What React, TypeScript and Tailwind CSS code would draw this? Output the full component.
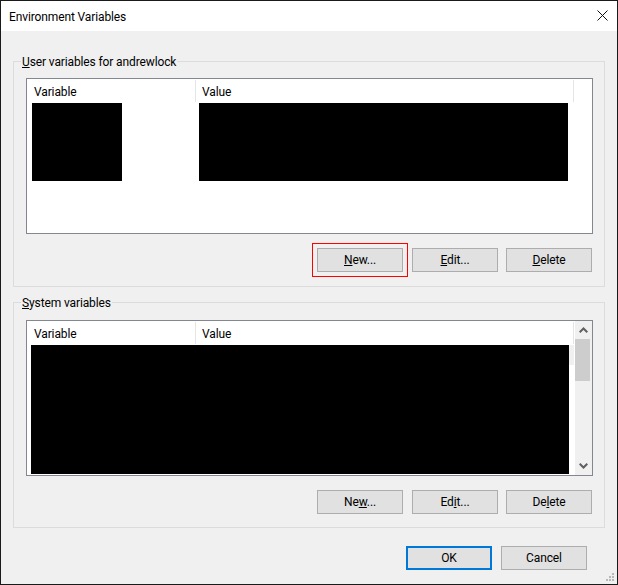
const font = 'font-["Roboto",sans-serif] tracking-[-0.12px]'

function Btn({ children, primary = false, className = '' }: { children: React.ReactNode; primary?: boolean; className?: string }) {
  return (
    <button
      type="button"
      className={`w-[86px] h-6 flex items-center justify-center bg-[#e1e1e1] text-[12px] text-black leading-none ${primary ? 'border-2 border-[#0078d7]' : 'border border-[#adadad]'} ${className}`}
    >
      {children}
    </button>
  )
}

function Group({ label, listTop = 'pt-4', children }: { label: React.ReactNode; listTop?: string; children: React.ReactNode }) {
  return (
    <div className={`relative h-[226px] border border-[#dcdcdc] pl-3 pr-[11px] ${listTop}`}>
      <span className="absolute -top-2 left-[7px] bg-[#f0f0f0] px-px text-[12px] leading-4 text-black">{label}</span>
      {children}
    </div>
  )
}

function ListHeader() {
  return (
    <div className="flex h-6 shrink-0 text-[12px] text-black">
      <div className="w-[169px] h-[22px] mt-px pt-0.5 pl-[7px] flex items-center border-r border-[#e5e5e5]">Variable</div>
      <div className="w-[378px] h-[22px] mt-px pt-0.5 pl-[6px] flex items-center border-r border-[#e5e5e5]">Value</div>
    </div>
  )
}

export default function App() {
  return (
    <div className={`relative w-[618px] h-[585px] overflow-hidden border border-[#1a1a1a] bg-[#f0f0f0] flex flex-col ${font}`}>
      {/* Title bar */}
      <div className="h-[30px] bg-white flex justify-between pl-2 pr-[9px] text-[12px] text-black">
        <span className="leading-[32px]">Environment Variables</span>
        <svg className="mt-[9px]" width="11" height="11" viewBox="0 0 11 11" stroke="#111" strokeWidth="1" fill="none">
          <path d="M0.5 0.5L10.5 10.5M10.5 0.5L0.5 10.5" />
        </svg>
      </div>

      <div className="flex-1 px-3 pt-[30px] flex flex-col">
        <Group label={<><u>U</u>ser variables for andrewlock</>}>
          <div className="h-[156px] border border-[#828790] bg-white flex flex-col">
            <ListHeader />
            <div className="flex pl-[5px]">
              <div className="w-[90px] h-[78px] bg-black" />
              <div className="ml-[77px] w-[369px] h-[78px] bg-black" />
            </div>
          </div>
          <div className="mt-[14px] mr-px flex justify-end">
            <Btn><span><u>N</u>ew...</span></Btn>
            <Btn className="ml-[9px]"><span><u>E</u>dit...</span></Btn>
            <Btn className="ml-2"><span><u>D</u>elete</span></Btn>
          </div>
        </Group>

        <div className="h-[15px] shrink-0" />

        <Group label={<><u>S</u>ystem variables</>} listTop="pt-[17px]">
          <div className="h-[156px] border border-[#828790] bg-white flex">
            <div className="flex-1 flex flex-col min-w-0">
              <ListHeader />
              <div className="flex ml-1">
                <div className="w-[538px] h-[129px] bg-black" />
                <div className="w-[5px] h-5 bg-[#f0f0f0]" />
              </div>
            </div>
            <div className="w-[17px] shrink-0 flex flex-col bg-[#f0f0f0]">
              <div className="h-[18px] flex items-center justify-center">
                <svg width="9" height="6" viewBox="0 0 9 6" fill="none" stroke="#606060" strokeWidth="2"><path d="M0.7 5.3L4.5 1.5L8.3 5.3" /></svg>
              </div>
              <div className="w-[15px] h-[42px] bg-[#cdcdcd]" />
              <div className="flex-1" />
              <div className="h-[18px] flex items-center justify-center">
                <svg width="9" height="6" viewBox="0 0 9 6" fill="none" stroke="#606060" strokeWidth="2"><path d="M0.7 0.7L4.5 4.5L8.3 0.7" /></svg>
              </div>
            </div>
          </div>
          <div className="mt-[14px] mr-px flex justify-end">
            <Btn><span>Ne<u>w</u>...</span></Btn>
            <Btn className="ml-[9px]"><span>Ed<u>i</u>t...</span></Btn>
            <Btn className="ml-2"><span>De<u>l</u>ete</span></Btn>
          </div>
        </Group>

        <div className="mt-[18px] mr-[18px] flex justify-end">
          <Btn primary>OK</Btn>
          <Btn className="ml-[9px]">Cancel</Btn>
        </div>
      </div>

      {/* Size grip */}
      <svg className="absolute right-[3px] bottom-[3px]" width="8" height="8" viewBox="0 0 8 8" fill="#b8b8b8">
        <path d="M6 0h2v2H6zM3 3h2v2H3zM6 3h2v2H6zM0 6h2v2H0zM3 6h2v2H3zM6 6h2v2H6z" />
      </svg>

      {/* Red annotation round the first New button */}
      <div className="absolute left-[311px] top-[242px] w-[96px] h-[34px] border border-[#ff0000]" />
    </div>
  )
}
